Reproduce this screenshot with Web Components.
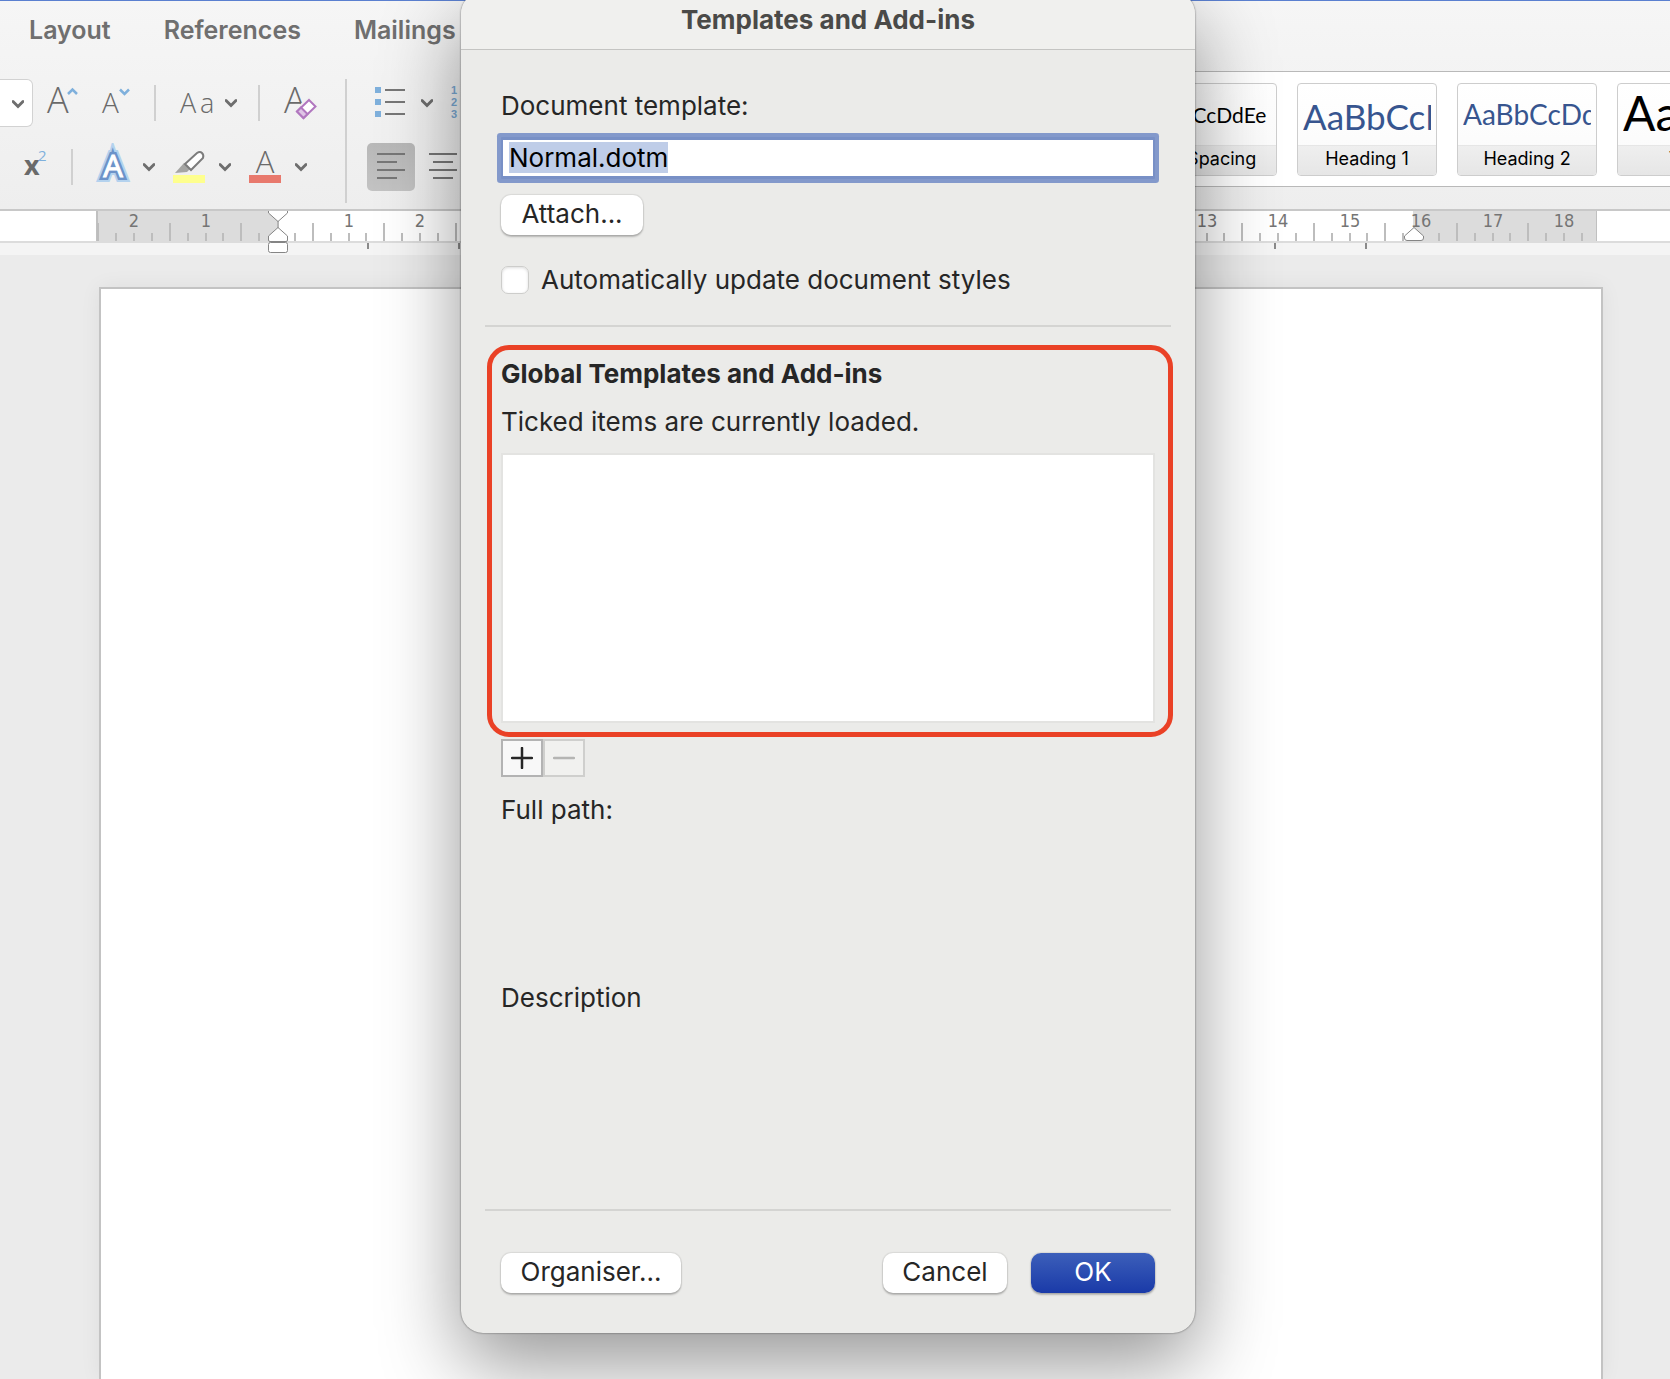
<!DOCTYPE html>
<html lang="en">
<head>
<meta charset="utf-8">
<title>Templates and Add-ins</title>
<style>
    html, body { height: 100%; }
    body {
        margin: 0;
        overflow: hidden;
        font-family: Inter, 'Liberation Sans', sans-serif;
        background: #ebebeb;
    }
</style>
</head>
<body>
<word-window>
    <ribbon-tabs slot="tabs"></ribbon-tabs>
    <ribbon-tools slot="tools"></ribbon-tools>
    <style-gallery slot="gallery">
        <style-card label="No Spacing" look="plain"></style-card>
        <style-card label="Heading 1" look="h1"></style-card>
        <style-card label="Heading 2" look="h2"></style-card>
        <style-card label="Title" look="title"></style-card>
    </style-gallery>
    <page-ruler slot="ruler"></page-ruler>
    <templates-dialog slot="dialog"></templates-dialog>
</word-window>

<script>
class WordWindow extends HTMLElement {
    constructor() {
        super();
        this.attachShadow({ mode: 'open' }).innerHTML = `
            <style>
                :host {
                    display: flex;
                    flex-direction: column;
                    position: relative;
                    height: 100vh;
                    overflow: hidden;
                }
                header {
                    border-top: 1px solid #5b80d0;
                    border-bottom: 2px solid #c8c8c8;
                    background: linear-gradient(#f6f6f6, #eeeeee);
                }
                .row {
                    display: flex;
                    justify-content: space-between;
                    height: 138px;
                }
                .desk {
                    flex: 1;
                    display: flex;
                    padding: 32px 67px 0 99px;
                }
                .page {
                    flex: 1;
                    background: #fff;
                    border: 2px solid #c3c3c3;
                    border-bottom: 0;
                    box-shadow: 0 0 20px rgba(0, 0, 0, 0.06);
                }
            </style>
            <header>
                <slot name="tabs"></slot>
                <div class="row">
                    <slot name="tools"></slot>
                    <slot name="gallery"></slot>
                </div>
            </header>
            <slot name="ruler"></slot>
            <main class="desk"><div class="page"></div></main>
            <slot name="dialog"></slot>
        `;
    }
}

class RibbonTabs extends HTMLElement {
    constructor() {
        super();
        this.attachShadow({ mode: 'open' }).innerHTML = `
            <style>
                :host { display: block; height: 70px; }
                nav { display: flex; gap: 53px; padding: 13px 29px; }
                a {
                    font-size: 25px;
                    line-height: 32px;
                    font-weight: 600;
                    color: #6f6f6f;
                    text-decoration: none;
                }
            </style>
            <nav>
                <a href="#layout">Layout</a>
                <a href="#references">References</a>
                <a href="#mailings">Mailings</a>
            </nav>
        `;
    }
}

const ICONS = {
    grow: `<text x="9" y="34" font-size="36">A</text>
        <path d="M30 15l4.500-4.500 4.500 4.500" stroke="#7fb0dc" stroke-width="2.500"/>`,
    shrink: `<text x="11" y="34" font-size="28">A</text>
        <path d="M29 10.500l4.500 4.500 4.500-4.500" stroke="#7fb0dc" stroke-width="2.500"/>`,
    changeCase: `<text x="9 29" y="34" font-size="27">Aa</text>`,
    clear: `<text x="9" y="34" font-size="36">A</text>
        <path d="M34 21l6.500 6.500-12 11.500-6.500-6.500z" fill="#f6f2f8" stroke="#f1f1f1" stroke-width="6"/>
        <path d="M34 21l6.500 6.500-12 11.500-6.500-6.500z" fill="#fff" stroke="#b177bf" stroke-width="2"/>
        <path d="M26 28.500l6.500 6.500-4 4-6.500-6.500z" fill="#dfc4e6" stroke="#b177bf" stroke-width="2"/>`,
    superscript: `<text x="13" y="32" font-size="27" font-weight="700">x</text>
        <text x="27" y="18" font-size="15" style="fill:#7fb0dc;font-weight:400">2</text>`,
    effects: `<g font-size="31" text-anchor="middle" stroke-linejoin="miter">
        <text x="24" y="34" stroke="#b4d2ee" stroke-width="10" style="font-weight:400">A</text>
        <text x="24" y="34" stroke="#6c93c9" stroke-width="6" style="font-weight:400">A</text>
        <text x="24" y="34" stroke="#fff" stroke-width="1" style="fill:#fff;font-weight:400">A</text></g>`,
    highlight: `<path d="M10 30l9-10 6 6-3 3z" fill="#a5a5a3"/>
        <path d="M20 21l12-11q3-2 5 0t1 5l-12 12z" fill="#fff" stroke="#7c7c7c" stroke-width="2"/>
        <rect x="8" y="32" width="32" height="8" fill="#feff8e"/>`,
    fontColor: `<text x="24" y="30" font-size="31" text-anchor="middle">A</text>
        <rect x="8" y="32" width="32" height="8" fill="#e8796d"/>`,
    bullets: `<path d="M8 8h6v6H8zM8 20h6v6H8zM8 32h6v6H8z" fill="#7fb0dc"/>
        <path d="M18 11h20M18 23h20M18 35h20" stroke="#777" stroke-width="2"/>`,
    numbers: `<g font-size="11" style="--ink:#7aa9d3;--w:700;--face:'Liberation Sans'"><text x="8" y="15">1</text>
        <text x="8" y="27">2</text><text x="8" y="39">3</text></g>
        <path d="M20 11h20M20 23h20M20 35h20" stroke="#777" stroke-width="2"/>`,
    left: `<path d="M10 11h28M10 19h20M10 27h28M10 35h20" stroke="#777" stroke-width="2"/>`,
    center: `<path d="M10 11h28M14 19h20M10 27h28M14 35h20" stroke="#777" stroke-width="2"/>`
};

// One ribbon command: a 48px icon, with a menu arrow beside it when "menu" is set
class ToolButton extends HTMLElement {
    constructor() {
        super();
        this.attachShadow({ mode: 'open' });
    }

    connectedCallback() {
        const icon = this.getAttribute('icon');
        const menu = this.hasAttribute('menu')
            ? `<button class="arrow" aria-label="${icon} menu"><svg width="12" height="48" viewBox="0 0 12 48">
                <path d="M1 21.500l5 5 5-5" stroke="#6e6e6e" stroke-width="3" stroke-linecap="round"/></svg></button>`
            : '';
        this.shadowRoot.innerHTML = `
            <style>
                :host { display: flex; height: 48px; }
                button {
                    display: grid;
                    place-items: center;
                    height: 48px;
                    padding: 0;
                    border: 0;
                    border-radius: 5px;
                    background: none;
                }
                .icon { width: 48px; }
                .arrow { width: 24px; }
                :host([pressed]) .icon { background: linear-gradient(#b8b8b8, #c3c3c3); }
                svg { display: block; fill: none; }
                text {
                    font-family: var(--face, 'Open Sans'), 'Noto Sans', sans-serif;
                    font-weight: var(--w, 300);
                    fill: var(--ink, #6a6a6a);
                }
                text[font-weight="700"] { font-weight: 700; }
            </style>
            <button class="icon" aria-label="${icon}">
                <svg width="48" height="48" viewBox="0 0 48 48">${ICONS[icon]}</svg>
            </button>${menu}
        `;
    }
}

class RibbonTools extends HTMLElement {
    constructor() {
        super();
        this.attachShadow({ mode: 'open' }).innerHTML = `
            <style>
                :host { display: flex; padding-top: 8px; }
                .group { display: flex; flex-direction: column; gap: 16px; }
                .font { width: 345px; }
                .para { padding-left: 20px; }
                .line { display: flex; height: 48px; align-items: center; gap: 4px; }
                .top { gap: 5px; }
                .bottom { padding-left: 11px; }
                .size {
                    box-sizing: border-box;
                    width: 33px;
                    height: 48px;
                    padding: 0 0 0 4px;
                    border: 1px solid #d2d2d2;
                    border-left: 0;
                    border-radius: 0 6px 6px 0;
                    background: #fff;
                    display: grid;
                    place-items: center;
                }
                svg { display: block; fill: none; }
                i { width: 2px; height: 36px; background: #d0d0d0; }
                .top i { margin: 0 10px; }
                .bottom i { margin: 0 12px 0 8px; }
                .divider { width: 2px; height: 124px; background: #d0d0d0; }
            </style>
            <div class="group font">
                <div class="line top">
                    <button class="size" aria-label="Font size"><svg width="12" height="48" viewBox="0 0 12 48">
                        <path d="M1 21.500l5 5 5-5" stroke="#6e6e6e" stroke-width="3" stroke-linecap="round"/></svg></button>
                    <tool-button icon="grow"></tool-button>
                    <tool-button icon="shrink"></tool-button>
                    <i></i>
                    <tool-button icon="changeCase" menu></tool-button>
                    <i></i>
                    <tool-button icon="clear"></tool-button>
                </div>
                <div class="line bottom">
                    <tool-button icon="superscript"></tool-button>
                    <i></i>
                    <tool-button icon="effects" menu></tool-button>
                    <tool-button icon="highlight" menu></tool-button>
                    <tool-button icon="fontColor" menu></tool-button>
                </div>
            </div>
            <div class="divider"></div>
            <div class="group para">
                <div class="line">
                    <tool-button icon="bullets" menu></tool-button>
                    <tool-button icon="numbers"></tool-button>
                </div>
                <div class="line">
                    <tool-button icon="left" pressed></tool-button>
                    <tool-button icon="center"></tool-button>
                </div>
            </div>
        `;
    }
}

class StyleGallery extends HTMLElement {
    constructor() {
        super();
        this.attachShadow({ mode: 'open' }).innerHTML = `
            <style>
                :host {
                    box-sizing: border-box;
                    display: flex;
                    gap: 20px;
                    width: 553px;
                    height: 116px;
                    padding: 11px 20px;
                    overflow: hidden;
                    background: #fff;
                    border-top: 1px solid #b9b9b9;
                    border-bottom: 1px solid #b9b9b9;
                }
            </style>
            <slot></slot>
        `;
    }
}

class StyleCard extends HTMLElement {
    constructor() {
        super();
        this.attachShadow({ mode: 'open' });
    }

    connectedCallback() {
        this.shadowRoot.innerHTML = `
            <style>
                :host { display: block; flex: none; width: 140px; height: 93px; }
                button {
                    display: flex;
                    flex-direction: column;
                    width: 100%;
                    height: 100%;
                    padding: 0;
                    border: 1px solid #cdcdcd;
                    border-radius: 4px;
                    background: linear-gradient(#fff, #fafafa);
                    overflow: hidden;
                    color: #000;
                }
                .sample {
                    align-self: stretch;
                    height: 61px;
                    margin: 0 5px;
                    overflow: hidden;
                    white-space: nowrap;
                    text-align: left;
                    font-family: Lato, 'Open Sans', sans-serif;
                    font-size: 21px;
                    line-height: 62px;
                }
                .h1 { font-size: 35px; color: #37558f; line-height: 64px; }
                .h2 { font-size: 28px; color: #37558f; line-height: 60px; }
                .title { font-size: 48px; line-height: 58px; }
                .name {
                    align-self: stretch;
                    flex: 1;
                    border-top: 1px solid #e6e6e6;
                    background: linear-gradient(#efefef, #e6e6e6);
                    font-family: Inter, sans-serif;
                    font-size: 18px;
                    line-height: 25px;
                }
            </style>
            <button>
                <span class="sample ${this.getAttribute('look')}">AaBbCcDdEe</span>
                <span class="name">${this.getAttribute('label')}</span>
            </button>
        `;
    }
}

class PageRuler extends HTMLElement {
    constructor() {
        super();
        this.attachShadow({ mode: 'open' });
    }

    connectedCallback() {
        // zero mark is 182px into the scale, one centimetre is about 71px
        const zero = 182;
        const unit = 71.5;
        let marks = '';
        for (let q = -10; q <= 73; q++) {
            if (q === 0 || q === 64) continue;
            const x = Math.round(zero + q * unit / 4) - 1;
            const tall = Math.abs(q) % 4 === 2;
            marks += `<path d="M${x} ${tall ? 12 : 22}V30" stroke="#bdbdbd" stroke-width="2"/>`;
        }
        for (let n = -2; n <= 18; n++) {
            // 3 to 12 lie under the sheet
            if (n === 0 || (n > 2 && n < 13)) continue;
            marks += `<text x="${Math.round(zero + n * unit) - 1}" y="16">${Math.abs(n)}</text>`;
        }
        for (let t = 1; t <= 12; t++) {
            const x = Math.round(zero + t * 90.75) - 1;
            marks += `<path d="M${x} 32v6" stroke="#8a8a8a" stroke-width="2"/>`;
        }
        this.shadowRoot.innerHTML = `
            <style>
                :host {
                    display: block;
                    height: 44px;
                    padding: 0 73px 0 96px;
                    background: linear-gradient(#fff 30px, #dcdcdc 30px, #dcdcdc 32px, #f4f4f4 32px);
                }
                .scale {
                    height: 30px;
                    background: linear-gradient(90deg, #dcdcdc 182px, #fff 182px,
                        #fff calc(100% - 184px), #dcdcdc calc(100% - 184px));
                    box-shadow: inset 2px 0 #c0c0c0, inset -1px 0 #c0c0c0;
                }
                svg { display: block; width: 100%; height: 44px; overflow: visible; }
                text {
                    font-family: 'DejaVu Sans Condensed', 'Noto Sans', sans-serif;
                    font-size: 18px;
                    text-anchor: middle;
                    fill: #757575;
                }
                .marker { fill: #fff; stroke: #858585; }
            </style>
            <div class="scale"><svg>
                ${marks}
                <path d="M182 10v8" stroke="#b5b5b5" stroke-width="2"/>
                <path class="marker" d="M172.500 0v2l9.500 8.500 9.500-8.500v-2"/>
                <path class="marker" d="M182 16.500l9.500 8.500v4q0 1.500-1.500 1.500h-16q-1.500 0-1.500-1.500v-4z"/>
                <rect class="marker" x="172.500" y="31.500" width="19" height="10" rx="2"/>
                <path class="marker" d="M1318 16.500l9.500 8.500v2q0 2.500-2.500 2.500h-14q-2.500 0-2.500-2.500v-2z"/>
            </svg></div>
        `;
    }
}

class PushButton extends HTMLElement {
    constructor() {
        super();
        this.attachShadow({ mode: 'open' }).innerHTML = `
            <style>
                :host { display: block; }
                button {
                    width: 100%;
                    height: 40px;
                    padding: 0 0 2px;
                    border: 0;
                    border-radius: 10px;
                    background: #fff;
                    box-shadow: 0 0 1px 1px rgba(0, 0, 0, 0.08), 0 2px 2px rgba(0, 0, 0, 0.22);
                    font: 26px/38px Inter, sans-serif;
                    color: #262626;
                }
                :host([primary]) button {
                    background: linear-gradient(#3c5fba, #1a3aa8);
                    color: #fff;
                }
            </style>
            <button><slot></slot></button>
        `;
    }
}

class TemplatesDialog extends HTMLElement {
    constructor() {
        super();
        this.attachShadow({ mode: 'open' }).innerHTML = `
            <style>
                /* sheet hanging from the top edge of the window */
                :host {
                    position: absolute;
                    top: -8px;
                    left: calc(50% - 374px);
                    width: 734px;
                    border-radius: 22px;
                    background: #ebebe9;
                    box-shadow: 0 0 2px rgba(0, 0, 0, 0.6), 0 30px 80px rgba(0, 0, 0, 0.42);
                    overflow: hidden;
                    color: #262626;
                    font-size: 26px;
                    line-height: 32px;
                }
                h1 {
                    margin: 0;
                    padding: 12px 0 13px;
                    border-bottom: 1px solid #c4c4c2;
                    background: #f0f0ee;
                    text-align: center;
                    font-size: 26px;
                    line-height: 32px;
                    font-weight: 700;
                    color: #4a4a48;
                }
                section { padding: 0 40px; display: flow-root; }
                hr { margin: 0 24px; border: 0; height: 2px; background: #d4d4d2; }
                .document { padding-top: 40px; padding-bottom: 29px; }
                label { display: block; }
                input[type="text"] {
                    display: block;
                    box-sizing: border-box;
                    width: 100%;
                    height: 42px;
                    margin: 15px 0 16px;
                    padding: 0 6px 2px;
                    border: solid #7890c6;
                    border-width: 3px 2px;
                    border-radius: 1px;
                    outline: 0;
                    box-shadow: 0 0 0 4px #8399cb;
                    background: #fff;
                    font: 26px/32px Inter, sans-serif;
                    color: #000;
                }
                input::selection { background: #bfcde8; color: #000; }
                .attach { width: 142px; margin-bottom: 29px; }
                .check { display: flex; align-items: center; gap: 12px; }
                input[type="checkbox"] {
                    appearance: none;
                    width: 28px;
                    height: 28px;
                    margin: 0;
                    border: 1px solid #cdcdcb;
                    border-radius: 7px;
                    background: #fff;
                    box-shadow: inset 0 1px 3px rgba(0, 0, 0, 0.14);
                }
                .global { position: relative; padding-top: 31px; }
                .global::after {
                    content: '';
                    position: absolute;
                    inset: 18px 22px -14px 26px;
                    border: 5px solid #ea4126;
                    border-radius: 22px;
                    pointer-events: none;
                }
                h2 { margin: 0 0 16px; font-size: 26px; line-height: 32px; font-weight: 700; }
                p { margin: 0 0 15px; }
                .list {
                    box-sizing: border-box;
                    height: 270px;
                    border: 2px solid #e3e3e1;
                    background: #fff;
                }
                .edit { display: flex; margin: 16px 40px 17px; }
                .edit button {
                    display: grid;
                    place-items: center;
                    width: 42px;
                    height: 38px;
                    padding: 0;
                    border: 2px solid #b3b3b3;
                    background: #f8f8f8;
                }
                .edit button:disabled { border-color: #cfcfcd; background: #f1f1ef; }
                .path { height: 188px; }
                .description { height: 227px; }
                footer { display: flex; gap: 24px; padding: 42px 40px 40px; }
                .organise { width: 180px; margin-right: auto; }
                .answer { width: 124px; }
            </style>
            <h1>Templates and Add-ins</h1>
            <section class="document">
                <label for="template">Document template:</label>
                <input id="template" type="text" value="Normal.dotm" spellcheck="false">
                <push-button class="attach">Attach...</push-button>
                <label class="check"><input type="checkbox">Automatically update document styles</label>
            </section>
            <hr>
            <section class="global">
                <h2>Global Templates and Add-ins</h2>
                <p>Ticked items are currently loaded.</p>
                <div class="list" role="listbox" aria-label="Global templates"></div>
            </section>
            <div class="edit">
                <button aria-label="Add"><svg width="22" height="22" viewBox="0 0 22 22">
                    <path d="M11 1v20M1 11h20" stroke="#262626" stroke-width="2.500" stroke-linecap="round"/></svg></button>
                <button aria-label="Remove" disabled><svg width="22" height="22" viewBox="0 0 22 22">
                    <path d="M1 11h20" stroke="#b5b5b3" stroke-width="2.500" stroke-linecap="round"/></svg></button>
            </div>
            <section class="path">Full path:</section>
            <section class="description">Description</section>
            <hr>
            <footer>
                <push-button class="organise">Organiser...</push-button>
                <push-button class="answer">Cancel</push-button>
                <push-button class="answer" primary>OK</push-button>
            </footer>
        `;
    }

    connectedCallback() {
        const field = this.shadowRoot.querySelector('#template');
        field.focus();
        field.select();
    }
}

customElements.define('tool-button', ToolButton);
customElements.define('push-button', PushButton);
customElements.define('ribbon-tabs', RibbonTabs);
customElements.define('ribbon-tools', RibbonTools);
customElements.define('style-card', StyleCard);
customElements.define('style-gallery', StyleGallery);
customElements.define('page-ruler', PageRuler);
customElements.define('word-window', WordWindow);
customElements.define('templates-dialog', TemplatesDialog);
</script>
</body>
</html>
